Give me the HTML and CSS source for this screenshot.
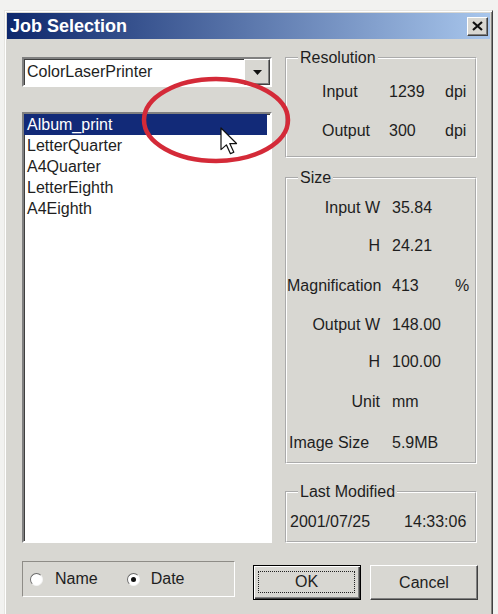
FILE: index.html
```html
<!DOCTYPE html>
<html lang="en">

<head>
    <meta charset="UTF-8">
    <meta name="viewport" content="width=device-width, initial-scale=1.0">
    <title>Job Selection</title>
    <link rel="stylesheet" href="styles.css">
</head>
<body>
    <div class="dialog">
        <div class="titlebar">
            <span class="title">Job Selection</span>
            <button class="close">
                <svg width="11" height="10" viewBox="0 0 11 10">
                    <path d="M1 1 L10 9 M10 1 L1 9" stroke="#111" stroke-width="2.2" />
                </svg>
            </button>
        </div>

        <div class="content">
            <!-- printer + job list -->
            <div class="left">
                <div class="combo">
                    <span class="combo-text">ColorLaserPrinter</span>
                    <span class="drop">
                        <svg width="9" height="5" viewBox="0 0 9 5"><path d="M0 0 H9 L4.5 5 Z" fill="#111" /></svg>
                    </span>
                </div>
                <ul class="joblist">
                    <li class="selected">Album_print</li>
                    <li>LetterQuarter</li>
                    <li>A4Quarter</li>
                    <li>LetterEighth</li>
                    <li>A4Eighth</li>
                </ul>
            </div>

            <!-- job details -->
            <div class="right">
                <fieldset class="group">
                    <legend>Resolution</legend>
                    <div class="res-grid">
                        <span>Input</span><span>1239</span><span>dpi</span>
                        <span>Output</span><span>300</span><span>dpi</span>
                    </div>
                </fieldset>

                <fieldset class="group size">
                    <legend>Size</legend>
                    <div class="size-grid">
                        <span class="lbl">Input W</span><span>35.84</span><span></span>
                        <span class="lbl">H</span><span>24.21</span><span></span>
                        <span class="lbl">Magnification</span><span>413</span><span>%</span>
                        <span class="lbl">Output W</span><span>148.00</span><span></span>
                        <span class="lbl">H</span><span>100.00</span><span></span>
                        <span class="lbl">Unit</span><span>mm</span><span></span>
                        <span class="lbl left-lbl">Image Size</span><span>5.9MB</span><span></span>
                    </div>
                </fieldset>

                <fieldset class="group modified">
                    <legend>Last Modified</legend>
                    <div class="stamp">
                        <span>2001/07/25</span>
                        <span>14:33:06</span>
                    </div>
                </fieldset>
            </div>
        </div>

        <div class="footer">
            <div class="sortbox">
                <span class="radio"></span><span class="radio-label">Name</span>
                <span class="radio checked"></span><span class="radio-label">Date</span>
            </div>
            <button class="btn default"><span class="focus">OK</span></button>
            <button class="btn">Cancel</button>
        </div>

        <!-- marker drawn over the selected row -->
        <svg class="markup" width="489" height="604" viewBox="0 0 489 604">
            <ellipse cx="211" cy="109" rx="72" ry="41" fill="none" stroke="#d42a38" stroke-width="4.5" />
            <path transform="translate(216 117) scale(1.35)" d="M0 0 L0 16 L4 12.5 L7 19 L9.5 18 L6.5 11.5 L11.5 11.5 Z"
                fill="#fff" stroke="#111" stroke-width="0.9" stroke-linejoin="round" />
        </svg>
    </div>
</body>
</html>
```

FILE: styles.css
```css
* {
    box-sizing: border-box;
}

body {
    margin: 0;
    background: #f2f2f0;
    font-family: "Liberation Sans", Arial, sans-serif;
    font-size: 16px;
    color: #1e1e1e;
}

.dialog {
    position: relative;
    width: 489px;
    margin: 10px 0 0 4px;
    padding: 2px;
    background: #d8d7d2;
    border: 1px solid;
    border-color: #e6e5e1 #404040 #404040 #e6e5e1;
    box-shadow: inset 1px 1px #fff, inset -1px -1px #85847f;
}

/* title bar */
.titlebar {
    display: flex;
    align-items: center;
    height: 26px;
    padding-left: 3px;
    background: linear-gradient(90deg, #0e286c, #a8c6ec);
}

.title {
    flex: 1;
    color: #fff;
    font-weight: bold;
    font-size: 18px;
}

.close {
    display: flex;
    align-items: center;
    justify-content: center;
    width: 21px;
    height: 19px;
    margin-right: 2px;
    padding: 0;
    background: #d8d7d2;
    border: 1px solid;
    border-color: #fff #404040 #404040 #fff;
    box-shadow: inset -1px -1px #808080;
}

/* main area */
.content {
    display: flex;
    gap: 13px;
    padding: 9px 13px 0 15px;
}

.left {
    width: 250px;
    padding-top: 9px;
}

.combo {
    display: flex;
    align-items: center;
    height: 30px;
    background: #fff;
    border: 2px solid;
    border-color: #808080 #fff #fff #808080;
    box-shadow: inset 1px 1px #404040;
}

.combo-text {
    flex: 1;
    padding-left: 3px;
}

.drop {
    display: flex;
    align-items: center;
    justify-content: center;
    width: 26px;
    height: 26px;
    background: #d8d7d2;
    border: 1px solid;
    border-color: #fff #404040 #404040 #fff;
    box-shadow: inset -1px -1px #808080;
}

.joblist {
    height: 431px;
    margin: 25px 0 0;
    padding: 0;
    list-style: none;
    background: #fff;
    border: 2px solid;
    border-color: #808080 #fff #fff #808080;
    box-shadow: inset 1px 1px #404040;
}

.joblist li {
    height: 21px;
    line-height: 21px;
    padding-left: 3px;
    margin-right: 3px;
}

.joblist .selected {
    background: #122a78;
    color: #fff;
}

.right {
    display: flex;
    flex-direction: column;
    width: 192px;
}

/* group boxes */
.group {
    margin: 0;
    padding: 0;
    min-width: 0;
    border: 2px groove #fff;
}

.group legend {
    margin-left: 11px;
    padding: 0 2px;
    line-height: 20px;
}

.res-grid {
    display: grid;
    grid-template-columns: 67px 56px auto;
    grid-auto-rows: 39px;
    align-items: center;
    padding: 4px 0 6px 35px;
}

.size {
    margin-top: 10px;
}

.size-grid {
    display: grid;
    grid-template-columns: 93px 63px auto;
    grid-template-rows: 36px 39px 41px 37px 38px 42px 39px;
    align-items: center;
    column-gap: 12px;
    padding-top: 2px;
    white-space: nowrap;
}

.size-grid .lbl {
    text-align: right;
}

.size-grid .left-lbl {
    text-align: left;
    padding-left: 2px;
}

.size-grid span:nth-child(3n) {
    margin-left: -12px;
}

.modified {
    margin-top: 18px;
}

.stamp {
    display: flex;
    align-items: center;
    gap: 34px;
    height: 39px;
    padding-left: 3px;
}

/* bottom row */
.footer {
    display: flex;
    align-items: flex-start;
    padding: 18px 0 14px 15px;
}

.sortbox {
    display: flex;
    align-items: center;
    width: 213px;
    height: 36px;
    padding-left: 7px;
    border: 1px solid;
    border-color: #8e8c87 #fff #fff #8e8c87;
}

.radio {
    position: relative;
    width: 13px;
    height: 13px;
    border-radius: 50%;
    background: #fff;
    border: 1px solid;
    border-color: #6a6a6a #f4f4f4 #f4f4f4 #6a6a6a;
}

.radio.checked::after {
    content: "";
    position: absolute;
    left: 3px;
    top: 3px;
    width: 5px;
    height: 5px;
    border-radius: 50%;
    background: #111;
}

.radio-label {
    margin: 0 29px 0 12px;
}

.radio-label:last-child {
    margin: 0 0 0 11px;
}

.btn {
    display: flex;
    align-items: center;
    justify-content: center;
    width: 108px;
    height: 35px;
    margin: 4px 0 0 9px;
    padding: 0;
    font: inherit;
    color: #1e1e1e;
    background: #d8d7d2;
    border: 1px solid;
    border-color: #fff #404040 #404040 #fff;
    box-shadow: inset -1px -1px #808080;
}

.btn.default {
    margin-left: 18px;
    border-color: #000;
    box-shadow: inset 1px 1px #fff, inset -1px -1px #404040, inset -2px -2px #808080;
}

.focus {
    flex: 1;
    align-self: stretch;
    display: flex;
    align-items: center;
    justify-content: center;
    margin: 5px 5px 6px 4px;
    border: 1px dotted #222;
}

.markup {
    position: absolute;
    left: 0;
    top: 0;
    pointer-events: none;
}
```
